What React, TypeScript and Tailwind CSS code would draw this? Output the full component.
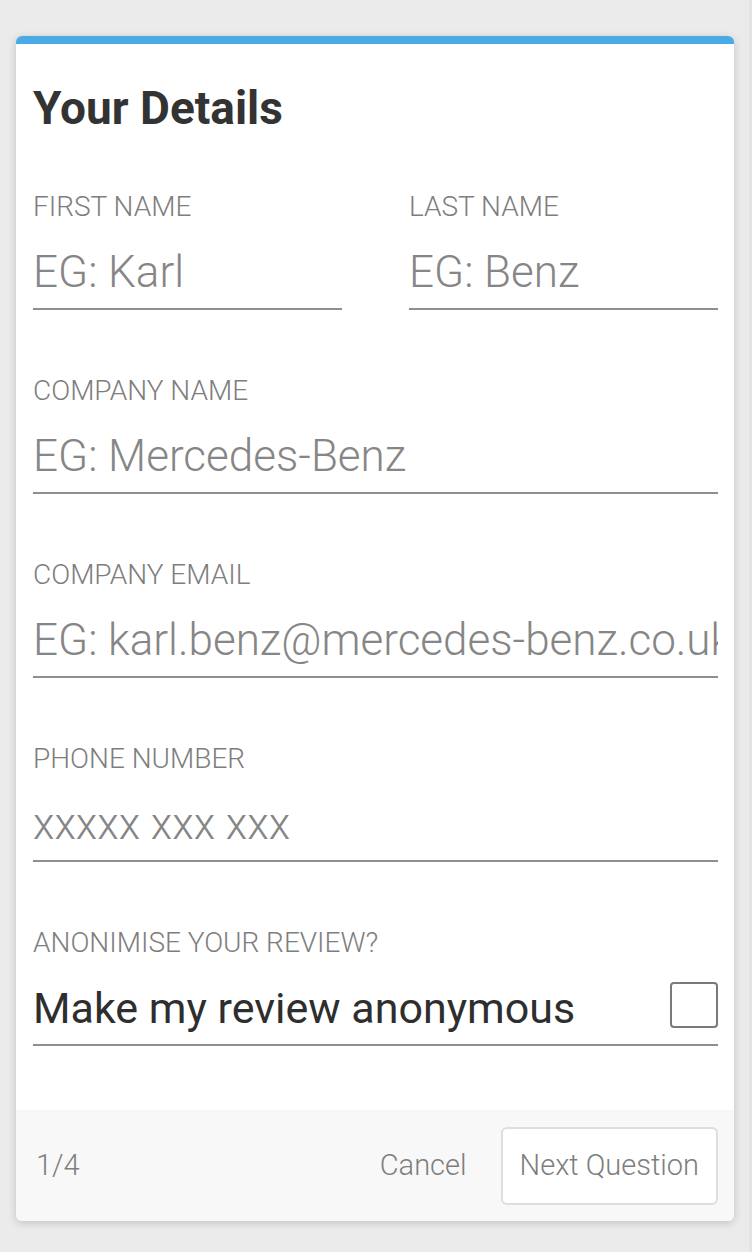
import * as React from "react"

type Field = {
  label: string
  placeholder: string
  type?: string
}

const font = "font-['Roboto','Liberation_Sans',sans-serif]"

function TextField({ label, placeholder, type = "text" }: Field) {
  return (
    <label className="block border-b-2 border-[#8f8f8f] pb-[10px]">
      <span className="block text-[28px] leading-[32px] font-light text-[#7e7e7e]">{label}</span>
      <input
        type={type}
        placeholder={placeholder}
        className="mt-[23px] block h-[52px] w-full bg-transparent p-0 text-[44px] leading-[52px] font-light text-[#333] outline-none placeholder:text-[#868686]"
      />
    </label>
  )
}

export default function App() {
  const [anon, setAnon] = React.useState(false)

  return (
    <div className={`flex min-h-[1252px] w-full bg-[#ebebeb] ${font}`}>
      <div className="flex-1 pl-4 pr-[15px] pt-9">
        <div className="overflow-hidden rounded-[6px] bg-white shadow-[0_2px_8px_rgba(0,0,0,0.18)]">
          <div className="h-2 bg-[#49aae6]" />
          <div className="pl-[17px] pr-4">
            <h1 className="pt-[38px] text-[46px] leading-[53px] font-bold text-[#333]">Your Details</h1>

            <div className="mt-[56px] grid grid-cols-2 gap-x-[67px]">
              <TextField label="FIRST NAME" placeholder="EG: Karl" />
              <TextField label="LAST NAME" placeholder="EG: Benz" />
            </div>
            <div className="mt-[65px]">
              <TextField label="COMPANY NAME" placeholder="EG: Mercedes-Benz" />
            </div>
            <div className="mt-[65px]">
              <TextField label="COMPANY EMAIL" placeholder="EG: karl.benz@mercedes-benz.co.uk" type="email" />
            </div>
            <div className="mt-[65px]">
              <TextField label="PHONE NUMBER" placeholder="xxxxx xxx xxx" type="tel" />
            </div>

            <div className="mt-[65px] border-b-2 border-[#8f8f8f] pb-[10px]">
              <span className="block text-[28px] leading-[32px] font-light text-[#7e7e7e]">ANONIMISE YOUR REVIEW?</span>
              <div className="mt-[23px] flex h-[52px] items-center justify-between">
                <span className="text-[43px] leading-[52px] text-[#2e2e2e]">Make my review anonymous</span>
                <button
                  type="button"
                  aria-pressed={anon}
                  onClick={() => setAnon(!anon)}
                  className="-mt-[6px] h-[46px] w-[48px] rounded-[4px] border-2 border-[#7a7a7a] bg-white"
                />
              </div>
            </div>
          </div>

          <div className="mt-[64px] flex h-[111px] items-center bg-[#f8f8f8] pl-5 pr-4">
            <span className="text-[29px] font-light text-[#7e7e7e]">1/4</span>
            <div className="ml-auto flex items-center gap-[34px]">
              <button type="button" className="text-[29px] font-light text-[#7e7e7e]">Cancel</button>
              <button
                type="button"
                className="h-[78px] rounded-[6px] border-2 border-[#dedede] bg-white px-[17px] text-[29px] font-light text-[#7e7e7e]"
              >
                Next Question
              </button>
            </div>
          </div>
        </div>
      </div>
      <div className="w-[3px] bg-[#e3e3e3]" />
    </div>
  )
}
